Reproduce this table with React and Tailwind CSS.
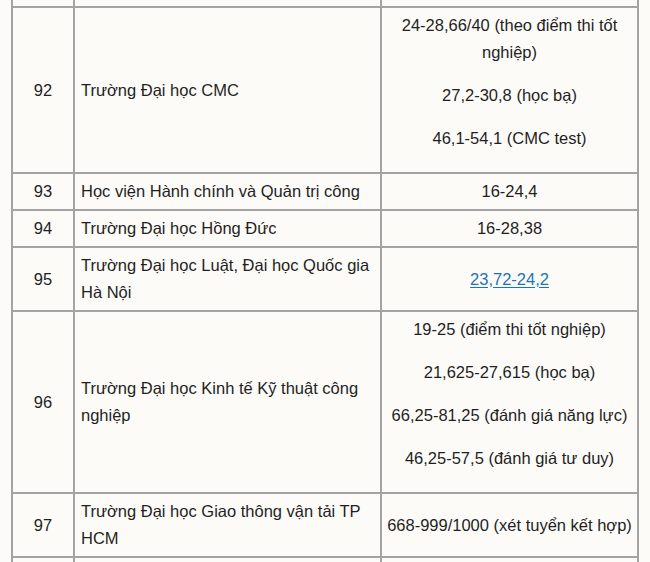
import React from "react";

const td1 = "border-r-2 border-b-2 border-l-2 border-[#a3a3a3] w-[64px] text-center align-middle px-1 py-1";
const td2 = "border-r-2 border-b-2 border-[#a3a3a3] w-[307px] text-left align-middle px-[6px] py-1";
const td3 = "border-r-2 border-b-2 border-[#a3a3a3] w-[257px] text-center align-middle px-1 py-1";

function Multi({ lines }) {
  return lines.map((l, i) => (
    <p key={i} className="mb-4">
      {l}
    </p>
  ));
}

export default function App() {
  return (
    <div
      className="w-[650px] h-[562px] overflow-hidden bg-[#fdfbf8] text-[#1f1f1f] text-[16.5px] leading-[27px]"
      style={{ fontFamily: '"Liberation Sans", Arial, sans-serif' }}
    >
      <table className="ml-[11px] border-separate border-spacing-0 table-fixed w-[628px]">
        <tbody>
          <tr>
            <td className="border-r-2 border-b-2 border-l-2 border-[#a3a3a3] w-[64px] h-[8px] p-0"></td>
            <td className="border-r-2 border-b-2 border-[#a3a3a3] w-[307px] h-[8px] p-0"></td>
            <td className="border-r-2 border-b-2 border-[#a3a3a3] w-[257px] h-[8px] p-0"></td>
          </tr>
          <tr>
            <td className={td1}>92</td>
            <td className={td2}>Trường Đại học CMC</td>
            <td className={td3}>
              <Multi
                lines={[
                  "24-28,66/40 (theo điểm thi tốt nghiệp)",
                  "27,2-30,8 (học bạ)",
                  "46,1-54,1 (CMC test)",
                ]}
              />
            </td>
          </tr>
          <tr>
            <td className={td1}>93</td>
            <td className={td2}>Học viện Hành chính và Quản trị công</td>
            <td className={td3}>16-24,4</td>
          </tr>
          <tr>
            <td className={td1}>94</td>
            <td className={td2}>Trường Đại học Hồng Đức</td>
            <td className={td3}>16-28,38</td>
          </tr>
          <tr>
            <td className={td1}>95</td>
            <td className={td2}>Trường Đại học Luật, Đại học Quốc gia Hà Nội</td>
            <td className={td3}>
              <a href="#" className="text-[#1b75bb] underline underline-offset-2">
                23,72-24,2
              </a>
            </td>
          </tr>
          <tr>
            <td className={td1}>96</td>
            <td className={td2}>Trường Đại học Kinh tế Kỹ thuật công nghiệp</td>
            <td className={td3}>
              <Multi
                lines={[
                  "19-25 (điểm thi tốt nghiệp)",
                  "21,625-27,615 (học bạ)",
                  "66,25-81,25 (đánh giá năng lực)",
                  "46,25-57,5 (đánh giá tư duy)",
                ]}
              />
            </td>
          </tr>
          <tr>
            <td className={td1}>97</td>
            <td className={td2}>Trường Đại học Giao thông vận tải TP HCM</td>
            <td className={td3}>668-999/1000 (xét tuyển kết hợp)</td>
          </tr>
          <tr>
            <td className="border-r-2 border-l-2 border-[#a3a3a3] w-[64px] h-[20px] p-0"></td>
            <td className="border-r-2 border-[#a3a3a3] w-[307px] h-[20px] p-0"></td>
            <td className="border-r-2 border-[#a3a3a3] w-[257px] h-[20px] p-0"></td>
          </tr>
        </tbody>
      </table>
    </div>
  );
}
